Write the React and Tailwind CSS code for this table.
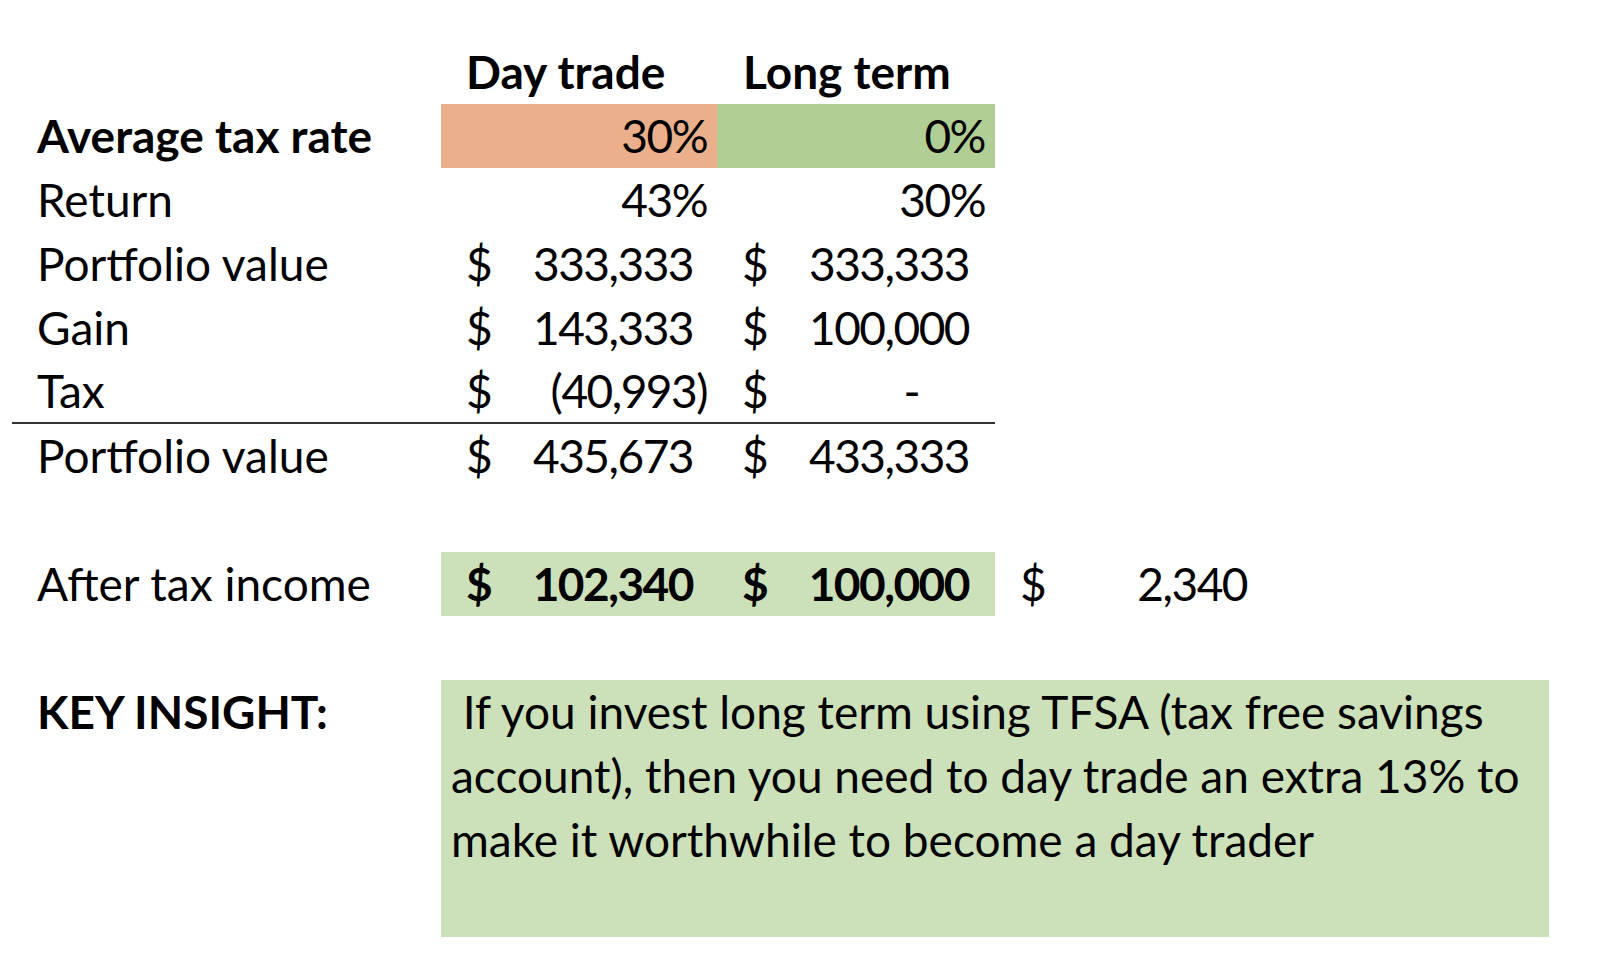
import React from 'react'

const Money = ({ value, bold, pr = 'pr-[24px]' }) => (
  <div className={`flex h-full items-center justify-between pl-[25px] ${pr} ${bold ? 'font-bold' : ''}`}>
    <span>$</span>
    <span className="tracking-[-1.5px]">{value}</span>
  </div>
)

const Pct = ({ value }) => (
  <div className="flex h-full items-center justify-end pr-[10px] tracking-[-1.5px]">{value}</div>
)

const Label = ({ children, bold }) => (
  <div className={`w-[429px] pl-[25px] ${bold ? 'font-bold' : ''}`}>{children}</div>
)

export default function App() {
  return (
    <div className="min-h-screen w-[1600px] bg-white pt-10 pl-[12px] text-[46px] leading-[64px] text-black font-[Lato,sans-serif]">
      {/* header */}
      <div className="flex h-16 items-center">
        <Label />
        <div className="w-[276px] pl-[25px] font-bold">Day trade</div>
        <div className="w-[278px] pl-[26px] font-bold">Long term</div>
      </div>

      <div className="flex h-16 items-center">
        <Label bold>Average tax rate</Label>
        <div className="h-full w-[276px] bg-[#ebb08b]"><Pct value="30%" /></div>
        <div className="h-full w-[278px] bg-[#b1cf95]"><Pct value="0%" /></div>
      </div>

      <div className="flex h-16 items-center">
        <Label>Return</Label>
        <div className="h-full w-[276px]"><Pct value="43%" /></div>
        <div className="h-full w-[278px]"><Pct value="30%" /></div>
      </div>

      <div className="flex h-16 items-center">
        <Label>Portfolio value</Label>
        <div className="h-full w-[276px]"><Money value="333,333" /></div>
        <div className="h-full w-[278px]"><Money value="333,333" pr="pr-[26px]" /></div>
      </div>

      <div className="flex h-16 items-center">
        <Label>Gain</Label>
        <div className="h-full w-[276px]"><Money value="143,333" /></div>
        <div className="h-full w-[278px]"><Money value="100,000" pr="pr-[26px]" /></div>
      </div>

      <div className="flex h-16 w-[983px] items-center border-b-2 border-[#333]">
        <Label>Tax</Label>
        <div className="h-full w-[276px]"><Money value="(40,993)" pr="pr-[10px]" /></div>
        <div className="h-full w-[278px]"><Money value="-" pr="pr-[76px]" /></div>
      </div>

      <div className="flex h-16 items-center">
        <Label>Portfolio value</Label>
        <div className="h-full w-[276px]"><Money value="435,673" /></div>
        <div className="h-full w-[278px]"><Money value="433,333" pr="pr-[26px]" /></div>
      </div>

      <div className="h-16" />

      <div className="flex h-16 items-center">
        <Label>After tax income</Label>
        <div className="h-full w-[276px] bg-[#cce0b9]"><Money value="102,340" bold /></div>
        <div className="h-full w-[278px] bg-[#cce0b9]"><Money value="100,000" bold pr="pr-[26px]" /></div>
        <div className="h-full w-[276px]"><Money value="2,340" /></div>
      </div>

      <div className="h-16" />

      {/* key insight */}
      <div className="flex items-start">
        <div className="flex h-16 w-[429px] items-center pl-[25px] font-bold">KEY INSIGHT:</div>
        <div className="h-[257px] w-[1108px] whitespace-nowrap bg-[#cce0b9] pl-[10px]">
          <div className="whitespace-pre"> If you invest long term using TFSA (tax free savings</div>
          <div>account), then you need to day trade an extra 13% to</div>
          <div>make it worthwhile to become a day trader</div>
        </div>
      </div>
    </div>
  )
}
